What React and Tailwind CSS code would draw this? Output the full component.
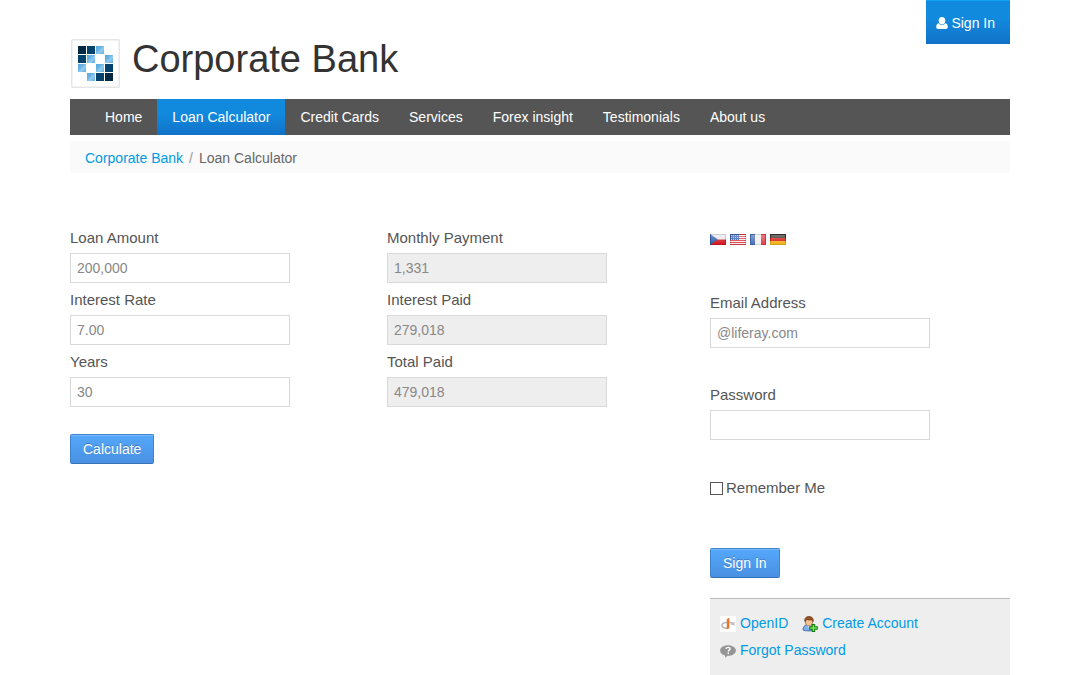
import React, { useState } from "react";

const navItems = ["Home", "Loan Calculator", "Credit Cards", "Services", "Forex insight", "Testimonials", "About us"];

const logoCells = [
  ["dark", "navy", "light", "none"],
  ["navy", "light", "none", "light"],
  ["light", "none", "light", "navy"],
  ["none", "light", "navy", "dark"],
];
const cellFill = { dark: "#022844", navy: "#04436d", light: "url(#cell-light)" };

function Logo() {
  return (
    <svg width="50" height="50" viewBox="0 0 50 50" aria-hidden="true">
      <defs>
        <linearGradient id="cell-light" x1="0" y1="0" x2="1" y2="1">
          <stop offset="0" stopColor="#5aa9df" />
          <stop offset="0.35" stopColor="#66b2e4" />
          <stop offset="0.6" stopColor="#94cbee" />
          <stop offset="1" stopColor="#5fade1" />
        </linearGradient>
      </defs>
      <rect x="1.750" y="1.750" width="47.500" height="47.500" rx="1" fill="#fff" stroke="#e6e6e6" strokeWidth="1.500" />
      {logoCells.map((row, r) =>
        row.map((cell, c) =>
          cell === "none" ? null : (
            <rect key={`${r}-${c}`} x={8 + c * 9} y={8 + r * 9} width="8" height="8" fill={cellFill[cell]} />
          )
        )
      )}
    </svg>
  );
}

function UserIcon() {
  return (
    <svg width="12" height="12" viewBox="0 0 12 12" fill="#fff" aria-hidden="true">
      <ellipse cx="6" cy="3.700" rx="3.300" ry="3.700" />
      <path d="M2.600 6.200C.9 6.600.2 8 .2 10c0 1.200.8 2 2 2h7.600c1.200 0 2-.8 2-2 0-2-.7-3.400-2.400-3.800C8.600 7.400 7.400 8 6 8S3.400 7.400 2.600 6.200z" />
    </svg>
  );
}

function Flag({ id, children }) {
  return (
    <svg width="16" height="11" viewBox="0 0 16 11" aria-hidden="true">
      <defs>
        <linearGradient id={`gloss-${id}`} x1="0" y1="0" x2="0" y2="1">
          <stop offset="0" stopColor="#fff" stopOpacity="0.35" />
          <stop offset="1" stopColor="#fff" stopOpacity="0.050" />
        </linearGradient>
      </defs>
      {children}
      <rect x="1" y="1" width="14" height="9" fill={`url(#gloss-${id})`} />
      <rect x="0.5" y="0.5" width="15" height="10" fill="none" stroke="#444" strokeOpacity="0.15" />
    </svg>
  );
}

const flags = [
  {
    id: "cz",
    label: "čeština",
    art: (
      <>
        <rect width="16" height="5.500" fill="#e6e6ea" />
        <rect y="5.500" width="16" height="5.500" fill="#d00c16" />
        <path d="M0 0l8 5.500L0 11z" fill="#2456a4" />
      </>
    ),
  },
  {
    id: "us",
    label: "English",
    art: (
      <>
        <rect width="16" height="11" fill="#f6eaea" />
        <path d="M0 .5h16M0 2.500h16M0 4.500h16M0 6.500h16M0 8.500h16M0 10.500h16" stroke="#da3a44" />
        <rect width="9" height="6" fill="#2f57b0" />
        <path d="M1 1.500h8M1 3.500h8M1 5.500h8" stroke="#a9bbe6" strokeDasharray="1 1" />
      </>
    ),
  },
  {
    id: "fr",
    label: "français",
    art: (
      <>
        <rect width="16" height="11" fill="#efefef" />
        <rect width="5" height="11" fill="#4468b8" />
        <rect x="11" width="5" height="11" fill="#e03540" />
      </>
    ),
  },
  {
    id: "de",
    label: "Deutsch",
    art: (
      <>
        <rect width="16" height="4" fill="#2a2622" />
        <rect y="4" width="16" height="3" fill="#d41408" />
        <rect y="7" width="16" height="4" fill="#eeb010" />
      </>
    ),
  },
];

function OpenIdIcon() {
  return (
    <svg width="16" height="16" viewBox="0 0 16 16" aria-hidden="true">
      <rect width="16" height="16" fill="#fff" />
      <path d="M7 6.300C3.800 6.500 1.900 7.700 1.900 9.300s2 2.800 5.100 3M9.500 6.300c1.500.1 2.600.5 3.600 1.100" fill="none" stroke="#bcbcbc" strokeWidth="1.700" />
      <path d="M14.500 5.800v3.700l-4-1z" fill="#bcbcbc" />
      <path d="M6.800 3l2.600-1.200v10.500l-2.600 1.200z" fill="#e8742c" />
    </svg>
  );
}

function AddUserIcon() {
  return (
    <svg width="16" height="16" viewBox="0 0 16 16" aria-hidden="true">
      <path d="M1 14c0-3.200 1.700-4.800 3.600-5.200h4.800C11.300 9.200 12.500 11 12.500 14c-2 1.200-9 1.300-11.500 0z" fill="#7fb2ee" stroke="#3d68ad" strokeWidth="0.9" />
      <path d="M4.500 9l2.500 3 2.500-3z" fill="#e9f1fb" />
      <path d="M3.300 5c0 3 1.500 5 3.700 5s3.700-2 3.700-5l-.8-2H4.100z" fill="#f6c295" stroke="#8d552f" strokeWidth="0.7" />
      <path d="M2.800 5.500C2.200 2.500 4 .5 7 .5s4.800 2 4.200 5L10 4C8 4.200 6 4 5 3.500L3.800 4.800z" fill="#9a5526" stroke="#5b2c10" strokeWidth="0.6" />
      <path d="M9.800 8h3.400v2.300h2.600v3.400h-2.600V16H9.800v-2.300H7.200v-3.400h2.600z" fill="#0f7a10" />
      <path d="M11.500 9v6M8.200 12h6.600" stroke="#7be45a" strokeWidth="1.500" />
    </svg>
  );
}

function HelpIcon() {
  return (
    <svg width="16" height="16" viewBox="0 0 16 16" aria-hidden="true">
      <path d="M8 2.200c4.400 0 7.900 2.300 7.900 5.200S12.400 12.700 8 12.700h-.8L5.600 15l-.8-2.700C2 11.600.1 9.700.1 7.400.1 4.500 3.600 2.200 8 2.200z" fill="#959595" />
      <path d="M6 6C6.100 4.900 6.900 4.400 8 4.400c1.200 0 2 .6 2 1.500 0 1.200-1.700 1.200-1.700 2.600M8.300 9.500V11" fill="none" stroke="#fff" strokeWidth="1.400" />
    </svg>
  );
}

function Field({ id, label, ...props }) {
  return (
    <div>
      <label htmlFor={id} className="block text-[15px] leading-[30px]">{label}</label>
      <input
        id={id}
        className="block h-[30px] w-full max-w-[220px] border border-[#d9d9d9] bg-white px-1.5 text-sm text-[#888] read-only:bg-[#eee]"
        {...props}
      />
    </div>
  );
}

function Button({ children }) {
  return (
    <button
      type="submit"
      className="h-[30px] rounded-xs border border-[#4083cf] border-b-[#3672b8] bg-linear-to-b from-[#54a8fb] to-[#4a90e2] px-3 text-sm text-white shadow-[inset_0_1px_0_rgba(255,255,255,0.2)] text-shadow-[0_-1px_0_rgba(0,0,0,0.25)]"
    >
      {children}
    </button>
  );
}

function monthlyPayment(amount, rate, years) {
  const r = rate / 1200;
  const n = years * 12;
  return r === 0 ? amount / n : (amount * r) / (1 - Math.pow(1 + r, -n));
}

const toNumber = (text) => Number(text.replace(/,/g, ""));
const format = (n) => Math.round(n).toLocaleString("en-US");

export default function App() {
  const [result, setResult] = useState({ monthly: "1,331", interest: "279,018", total: "479,018" });

  const calculate = (event) => {
    event.preventDefault();
    const form = new FormData(event.currentTarget);
    const amount = toNumber(form.get("amount"));
    const years = toNumber(form.get("years"));
    const monthly = monthlyPayment(amount, toNumber(form.get("rate")), years);
    const total = monthly * years * 12;
    setResult({ monthly: format(monthly), interest: format(total - amount), total: format(total) });
  };

  return (
    <div className="bg-white px-4 font-['Liberation_Sans',Arial,sans-serif] text-sm text-[#555]">
      <div className="mx-auto max-w-[940px]">
        <header>
          <div className="flex items-start justify-between">
            <a href="#" className="flex gap-3 pt-[38px] pb-[11px] text-[#333]">
              <Logo />
              <h1 className="text-[38px] leading-[42px]">Corporate Bank</h1>
            </a>
            <a
              href="#sign-in"
              className="flex h-11 items-center gap-[3px] border-t border-[#0ea5f5] bg-linear-to-b from-[#118ade] from-40% to-[#1272c8] pr-[15px] pl-2.5 text-white"
            >
              <UserIcon />
              Sign In
            </a>
          </div>
          <nav className="bg-[#555] pl-5">
            <ul className="flex flex-wrap">
              {navItems.map((item) => (
                <li key={item}>
                  <a
                    href="#"
                    aria-current={item === "Loan Calculator" ? "page" : undefined}
                    className="block px-[15px] leading-9 text-white aria-[current=page]:bg-linear-to-b aria-[current=page]:from-[#118ade] aria-[current=page]:from-40% aria-[current=page]:to-[#1272c8]"
                  >
                    {item}
                  </a>
                </li>
              ))}
            </ul>
          </nav>
          <nav aria-label="Breadcrumb" className="mt-1.5 rounded-sm bg-[#fafafa] px-[15px] pt-0.5">
            <ol className="flex gap-1.5 leading-[30px]">
              <li><a href="#" className="text-[#009ae5]">Corporate Bank</a></li>
              <li aria-hidden="true" className="text-[#999]">/</li>
              <li className="text-[#666]">Loan Calculator</li>
            </ol>
          </nav>
        </header>

        <main className="mt-[50px] grid grid-cols-[640fr_300fr]">
          <form onSubmit={calculate}>
            <div className="grid grid-cols-[317fr_323fr]">
              <div className="flex flex-col gap-0.5">
                <Field id="amount" name="amount" label="Loan Amount" defaultValue="200,000" />
                <Field id="rate" name="rate" label="Interest Rate" defaultValue="7.00" />
                <Field id="years" name="years" label="Years" defaultValue="30" />
              </div>
              <div className="flex flex-col gap-0.5">
                <Field id="monthly" label="Monthly Payment" value={result.monthly} readOnly />
                <Field id="interest" label="Interest Paid" value={result.interest} readOnly />
                <Field id="total" label="Total Paid" value={result.total} readOnly />
              </div>
            </div>
            <div className="mt-[27px]">
              <Button>Calculate</Button>
            </div>
          </form>

          <aside>
            <div className="flex gap-1 pt-[11px]">
              {flags.map((flag) => (
                <a key={flag.id} href={`#${flag.id}`} aria-label={flag.label}>
                  <Flag id={flag.id}>{flag.art}</Flag>
                </a>
              ))}
            </div>
            <form className="mt-[43px]" onSubmit={(event) => event.preventDefault()}>
              <div className="flex flex-col gap-8">
                <Field id="email" type="text" label="Email Address" defaultValue="@liferay.com" />
                <Field id="password" type="password" label="Password" />
              </div>
              <div className="mt-[33px] flex items-center gap-[3px]">
                <input
                  id="remember"
                  type="checkbox"
                  className="size-[13px] appearance-none border border-[#555] bg-white checked:bg-[#118ade]"
                />
                <label htmlFor="remember" className="text-[15px] leading-[30px]">Remember Me</label>
              </div>
              <div className="mt-[45px]">
                <Button>Sign In</Button>
              </div>
            </form>
            <ul className="mt-5 flex flex-wrap gap-x-3.5 border-t border-[#bbb] bg-[#eee] px-2.5 pt-[11px] pb-[11px] leading-[27px] text-[#009ae5]">
              <li><a href="#" className="flex items-center gap-1"><OpenIdIcon />OpenID</a></li>
              <li><a href="#" className="flex items-center gap-1"><AddUserIcon />Create Account</a></li>
              <li><a href="#" className="flex items-center gap-1"><HelpIcon />Forgot Password</a></li>
            </ul>
          </aside>
        </main>
      </div>
    </div>
  );
}
